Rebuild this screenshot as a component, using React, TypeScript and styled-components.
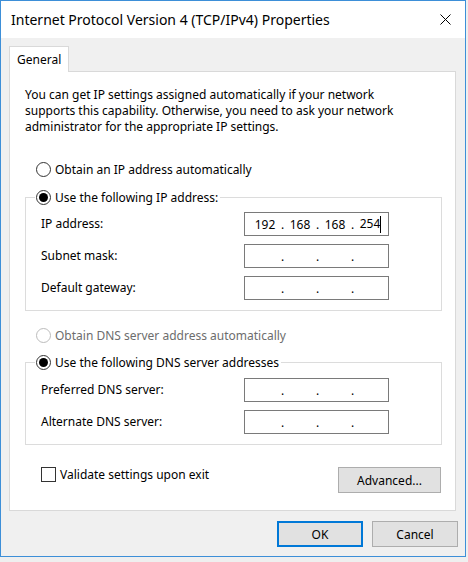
import React from "react";
import styled, { createGlobalStyle } from "styled-components";

const GlobalStyle = createGlobalStyle`
  html, body {
    margin: 0;
    padding: 0;
    background: #efefef;
  }
  body {
    font-family: "Noto Sans", "Open Sans", sans-serif;
    font-size: 12px;
    color: #000;
  }
  * {
    box-sizing: border-box;
  }
`;

const Window = styled.div`
  width: 466px;
  height: 557px;
  border: 1px solid #3d8fd8;
  background: #f0f0f0;
  display: flex;
  flex-direction: column;
`;

const TitleBar = styled.div`
  height: 37px;
  flex: none;
  background: #fff;
  display: flex;
  align-items: center;
  justify-content: space-between;
  padding-left: 10px;
`;

const Title = styled.div`
  font-size: 14px;
  color: #000;
`;

const CloseButton = styled.div`
  width: 40px;
  height: 37px;
  display: flex;
  align-items: center;
  justify-content: center;
`;

const Body = styled.div`
  flex: 1;
  display: flex;
  flex-direction: column;
  padding: 8px 7px 9px 8px;
`;

const TabStrip = styled.div`
  display: flex;
`;

const Tab = styled.div`
  position: relative;
  z-index: 1;
  width: 60px;
  height: 26px;
  margin-bottom: -1px;
  padding-left: 7px;
  display: flex;
  align-items: center;
  background: #fff;
  border: 1px solid #d9d9d9;
  border-bottom: none;
`;

const Panel = styled.div`
  width: 447px;
  height: 440px;
  flex: none;
  background: #fff;
  border: 1px solid #d9d9d9;
  padding: 15px 13px 0 15px;
  display: flex;
  flex-direction: column;
`;

const Intro = styled.p`
  margin: 0;
  line-height: 16px;
`;

const RadioRow = styled.label<{ $top?: number; $disabled?: boolean }>`
  display: flex;
  align-items: center;
  gap: 4px;
  height: 16px;
  margin-top: ${(p) => p.$top ?? 0}px;
  padding-left: 11px;
  color: ${(p) => (p.$disabled ? "#6d6d6d" : "#000")};
`;

const Radio = styled.span<{ $checked?: boolean; $disabled?: boolean }>`
  width: 15px;
  height: 15px;
  flex: none;
  border-radius: 50%;
  border: 1px solid ${(p) => (p.$disabled ? "#bcbcbc" : "#333")};
  background: #fff;
  display: flex;
  align-items: center;
  justify-content: center;
  &::after {
    content: "";
    display: ${(p) => (p.$checked ? "block" : "none")};
    width: 9px;
    height: 9px;
    border-radius: 50%;
    background: #000;
  }
`;

const Group = styled.fieldset<{ $top: number; $padTop: number }>`
  margin: ${(p) => p.$top}px 0 0 0;
  width: 417px;
  min-width: 0;
  border: 1px solid #dcdcdc;
  padding: ${(p) => p.$padTop}px 0 10px 15px;
`;

const Legend = styled.legend`
  margin-left: -6px;
  padding: 0 2px 0 1px;
  height: 16px;
  display: flex;
  align-items: center;
  gap: 4px;
`;

const FieldGrid = styled.div`
  display: grid;
  grid-template-columns: 203px 145px;
  row-gap: 8px;
  align-items: center;
`;

const FieldLabel = styled.span`
  line-height: 16px;
`;

const IpBox = styled.div`
  height: 24px;
  border: 1px solid #7a7a7a;
  background: #fff;
  display: flex;
  align-items: center;
  padding-left: 6px;
`;

const Segment = styled.span`
  width: 28px;
  text-align: center;
  white-space: nowrap;
`;

const Dot = styled.span`
  width: 7px;
  text-align: center;
`;

const Caret = styled.span`
  display: inline-block;
  width: 1px;
  height: 17px;
  margin-right: -1px;
  background: #000;
  vertical-align: middle;
`;

const BottomRow = styled.div`
  display: flex;
  justify-content: space-between;
  align-items: flex-start;
  margin-top: 22px;
  padding: 0 1px 0 16px;
`;

const CheckRow = styled.label`
  display: flex;
  align-items: center;
  gap: 4px;
  height: 15px;
`;

const Checkbox = styled.span`
  width: 15px;
  height: 15px;
  flex: none;
  border: 1px solid #333;
  background: #fff;
`;

const Button = styled.button<{ $width: number; $primary?: boolean }>`
  width: ${(p) => p.$width}px;
  height: 26px;
  padding: 0;
  font: inherit;
  color: #000;
  background: #e1e1e1;
  border: ${(p) => (p.$primary ? "2px solid #0078d7" : "1px solid #adadad")};
`;

const Footer = styled.div`
  display: flex;
  justify-content: flex-end;
  gap: 9px;
  margin-top: 10px;
`;

type Field = { label: string; value?: string[] };

const IpField: React.FC<{ value?: string[]; caret?: boolean }> = ({ value, caret }) => {
  const parts = value ?? ["", "", "", ""];
  return (
    <IpBox>
      {parts.map((part, i) => (
        <React.Fragment key={i}>
          {i > 0 && <Dot>.</Dot>}
          <Segment>
            {part}
            {caret && i === 3 && <Caret />}
          </Segment>
        </React.Fragment>
      ))}
    </IpBox>
  );
};

const ipFields: Field[] = [
  { label: "IP address:", value: ["192", "168", "168", "254"] },
  { label: "Subnet mask:" },
  { label: "Default gateway:" },
];

const dnsFields: Field[] = [
  { label: "Preferred DNS server:" },
  { label: "Alternate DNS server:" },
];

const Fields: React.FC<{ fields: Field[] }> = ({ fields }) => (
  <FieldGrid>
    {fields.map((f) => (
      <React.Fragment key={f.label}>
        <FieldLabel>{f.label}</FieldLabel>
        <IpField value={f.value} caret={!!f.value} />
      </React.Fragment>
    ))}
  </FieldGrid>
);

export default function App() {
  return (
    <>
      <GlobalStyle />
      <Window>
        <TitleBar>
          <Title>Internet Protocol Version 4 (TCP/IPv4) Properties</Title>
          <CloseButton>
            <svg width="11" height="11" viewBox="0 0 11 11">
              <path d="M0.5 0.5 L10.5 10.5 M10.5 0.5 L0.5 10.5" stroke="#000" strokeWidth="1" />
            </svg>
          </CloseButton>
        </TitleBar>
        <Body>
          <TabStrip>
            <Tab>General</Tab>
          </TabStrip>
          <Panel>
            <Intro>
              You can get IP settings assigned automatically if your network
              <br />
              supports this capability. Otherwise, you need to ask your network
              <br />
              administrator for the appropriate IP settings.
            </Intro>
            <RadioRow $top={26}>
              <Radio />
              Obtain an IP address automatically
            </RadioRow>
            <Group $top={12} $padTop={7}>
              <Legend>
                <Radio $checked />
                Use the following IP address:
              </Legend>
              <Fields fields={ipFields} />
            </Group>
            <RadioRow $top={16} $disabled>
              <Radio $disabled />
              Obtain DNS server address automatically
            </RadioRow>
            <Group $top={11} $padTop={8}>
              <Legend>
                <Radio $checked />
                Use the following DNS server addresses
              </Legend>
              <Fields fields={dnsFields} />
            </Group>
            <BottomRow>
              <CheckRow>
                <Checkbox />
                Validate settings upon exit
              </CheckRow>
              <Button $width={103}>Advanced...</Button>
            </BottomRow>
          </Panel>
          <Footer>
            <Button $width={86} $primary>
              OK
            </Button>
            <Button $width={86}>Cancel</Button>
          </Footer>
        </Body>
      </Window>
    </>
  );
}
